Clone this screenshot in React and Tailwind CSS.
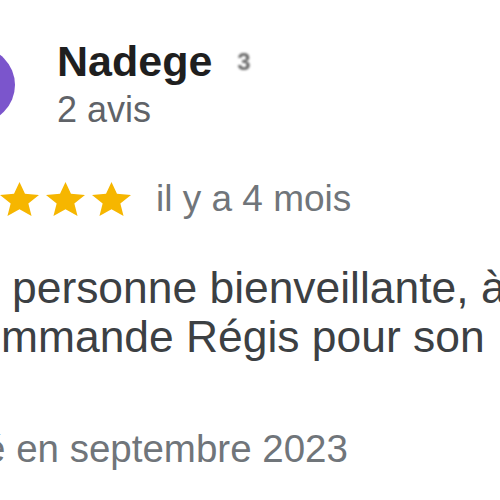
import React from "react";

function Star() {
  return (
    <svg width="39" height="34" viewBox="2 2 20 19" preserveAspectRatio="none" className="shrink-0">
      <path d="M12 17.27L18.18 21l-1.64-7.03L22 9.24l-7.19-.61L12 2 9.19 8.63 2 9.24l5.46 4.73L5.82 21z" fill="#f6b600" />
    </svg>
  );
}

export default function App() {
  return (
    <div
      className="w-[500px] h-[500px] overflow-hidden bg-white relative"
      style={{ fontFamily: '"Liberation Sans", Arial, sans-serif' }}
    >
      <div className="flex flex-col pt-[37px]">
        {/* header */}
        <div className="flex items-start">
          <div className="w-[76px] h-[76px] rounded-full bg-[#7b55cc] shrink-0 ml-[-61px] mt-[10px]" />
          <div className="flex flex-col ml-[42px]">
            <div className="flex items-center">
              <span className="text-[43px] leading-[48px] font-bold text-[#1f1f1f]">Nadege</span>
              <span className="ml-[25px] text-[24px] leading-[24px] text-[#6a6a6a] font-bold blur-[1px] mt-[2px]">3</span>
            </div>
            <div className="text-[36px] leading-[42px] text-[#606368] mt-[4px] whitespace-nowrap">2 avis</div>
          </div>
        </div>

        {/* rating */}
        <div className="flex items-center mt-[45px] ml-[-92px] h-[46px]">
          <div className="flex items-center gap-[7px]">
            <Star />
            <Star />
            <Star />
            <Star />
            <Star />
          </div>
          <span className="ml-[25px] text-[37px] leading-[46px] text-[#70757a] whitespace-nowrap">il y a 4 mois</span>
        </div>

        {/* body */}
        <div className="mt-[41px] text-[44.4px] leading-[49px] text-[#3c4043] whitespace-nowrap">
          <div className="pl-[12px]">personne bienveillante, à l'écoute</div>
          <div className="pl-[1px]">mmande Régis pour son</div>
        </div>

        <div className="mt-[66px] ml-[-88px] text-[38.5px] leading-[44px] text-[#70757a] whitespace-nowrap">
          Visité en septembre 2023
        </div>
      </div>
    </div>
  );
}
